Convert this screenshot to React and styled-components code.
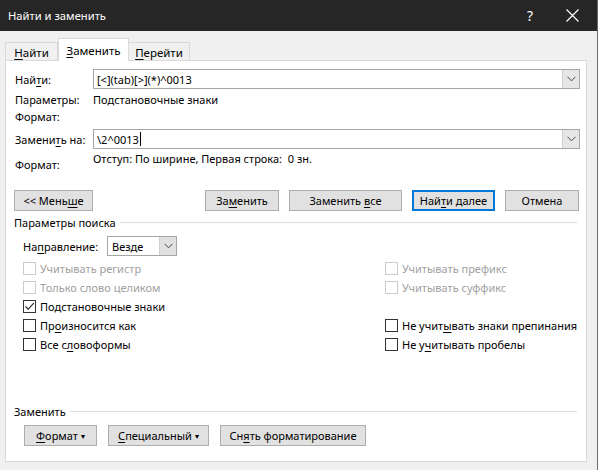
import React from 'react';
import styled, { createGlobalStyle } from 'styled-components';

const GlobalStyle = createGlobalStyle`
    html, body {
        margin: 0;
        padding: 0;
        background: #f0f0f0;
    }
    body {
        font-family: "Noto Sans", "Open Sans", sans-serif;
        font-size: 11px;
        color: #000;
    }
`;

const U = ({ children }) => <Ul>{children}</Ul>;

const Chevron = () => (
    <svg width="9" height="6" viewBox="0 0 9 6">
        <path d="M0.5 0.8 L4.5 4.8 L8.5 0.8" fill="none" stroke="#444" strokeWidth="1" />
    </svg>
);

const Combo = ({ value, caret }) => (
    <ComboBox>
        <ComboText>
            {value}
            {caret && <Caret />}
        </ComboText>
        <DropButton><Chevron /></DropButton>
    </ComboBox>
);

const Check = ({ label, checked, disabled }) => (
    <CheckRow $disabled={disabled}>
        <Box $disabled={disabled}>
            {checked && (
                <svg width="11" height="11" viewBox="0 0 11 11">
                    <path d="M1.5 5.5 L4.2 8.2 L9.8 2.2" fill="none" stroke="#222" strokeWidth="1.1" />
                </svg>
            )}
        </Box>
        <span>{label}</span>
    </CheckRow>
);

const App = () => {
    return (
        <>
            <GlobalStyle />
            <Dialog>
                <TitleBar>
                    <Title>Найти и заменить</Title>
                    <TitleButton>?</TitleButton>
                    <CloseButton>
                        <svg width="13" height="13" viewBox="0 0 13 13">
                            <path d="M0.5 0.5 L12.5 12.5 M12.5 0.5 L0.5 12.5" stroke="#fff" strokeWidth="1.2" />
                        </svg>
                    </CloseButton>
                </TitleBar>

                <Body>
                    <Tabs>
                        <Tab $w={53}><span><U>Н</U>айти</span></Tab>
                        <Tab $w={71} $active><span><U>З</U>аменить</span></Tab>
                        <Tab $w={61}><span><U>П</U>ерейти</span></Tab>
                    </Tabs>

                    <Panel>
                        <FieldRow>
                            <Label>Най<U>т</U>и:</Label>
                            <Combo value="[<](tab)[>](*)^0013" />
                        </FieldRow>
                        <InfoRow>
                            <Label>Параметры:</Label>
                            <Value>Подстановочные знаки</Value>
                        </InfoRow>
                        <InfoRow $top={0}>
                            <Label>Формат:</Label>
                            <Value />
                        </InfoRow>

                        <FieldRow $top={4}>
                            <Label>Замени<U>т</U>ь на:</Label>
                            <Combo value="\2^0013" caret />
                        </FieldRow>
                        <FormatRow>
                            <Label $low>Формат:</Label>
                            <Value>Отступ: По ширине, Первая строка:&nbsp; 0 зн.</Value>
                        </FormatRow>

                        <ButtonRow>
                            <Button $w={79}><span>&lt;&lt; Мень<U>ш</U>е</span></Button>
                            <Spacer />
                            <Button $w={74}><span>За<U>м</U>енить</span></Button>
                            <Button $w={113}><span>Заменить <U>в</U>се</span></Button>
                            <Button $w={83} $default><span>Най<U>т</U>и далее</span></Button>
                            <Button $w={74}><span>Отмена</span></Button>
                        </ButtonRow>

                        <Section>
                            <span>Параметры поиска</span>
                            <Line />
                        </Section>

                        <DirectionRow>
                            <DirLabel>На<U>п</U>равление:</DirLabel>
                            <Select>
                                <SelectText>Везде</SelectText>
                                <SelectButton><Chevron /></SelectButton>
                            </Select>
                        </DirectionRow>

                        <Checks>
                            <Check label="Учитывать регистр" disabled />
                            <Check label="Учитывать префикс" disabled />
                            <Check label="Только слово целиком" disabled />
                            <Check label="Учитывать суффикс" disabled />
                            <Check label="Подстановочные знаки" checked />
                            <div />
                            <Check label={<>Пр<U>о</U>износится как</>} />
                            <Check label={<>Не учит<U>ы</U>вать знаки препинания</>} />
                            <Check label={<>Все с<U>л</U>овоформы</>} />
                            <Check label={<>Не у<U>ч</U>итывать пробелы</>} />
                        </Checks>

                        <Section $top={49}>
                            <span>Заменить</span>
                            <Line />
                        </Section>

                        <BottomRow>
                            <Button $w={73}><span><U>Ф</U>ормат<Tri>▾</Tri></span></Button>
                            <Button $w={101}><span><U>С</U>пециальный<Tri>▾</Tri></span></Button>
                            <Button $w={146}><span>Сн<U>я</U>ть форматирование</span></Button>
                        </BottomRow>
                    </Panel>
                </Body>
            </Dialog>
        </>
    );
};

export default App;

const Dialog = styled.div`
    width: 598px;
    height: 470px;
    background: #f0f0f0;
    box-sizing: border-box;
    border-right: 1px solid #6a6a6a;
    display: flex;
    flex-direction: column;
    overflow: hidden;
`;

const TitleBar = styled.div`
    height: 31px;
    background: #262626;
    display: flex;
    align-items: center;
    padding-left: 8px;
    color: #fff;
`;

const Title = styled.div`
    flex: 1;
    font-size: 11.2px;
`;

const TitleButton = styled.div`
    width: 46px;
    text-align: center;
    font-size: 14px;
    margin-right: -4px;
`;

const CloseButton = styled.div`
    width: 46px;
    display: flex;
    justify-content: center;
    margin-right: 2px;
`;

const Body = styled.div`
    padding: 7px 10px 0 5px;
    display: flex;
    flex-direction: column;
`;

const Tabs = styled.div`
    display: flex;
    align-items: flex-end;
    height: 23px;
    position: relative;
    z-index: 1;
    margin-bottom: -1px;
`;

const Tab = styled.div`
    width: ${p => p.$w}px;
    height: ${p => (p.$active ? 23 : 19)}px;
    box-sizing: border-box;
    border: 1px solid #d9d9d9;
    border-bottom: ${p => (p.$active ? 'none' : '1px solid #d9d9d9')};
    border-left: ${p => (p.$active ? '1px solid #d9d9d9' : 'none')};
    background: ${p => (p.$active ? '#fff' : '#f0f0f0')};
    display: flex;
    align-items: center;
    justify-content: center;
    padding-top: ${p => (p.$active ? 0 : 1)}px;
    font-size: 11.5px;

    &:first-child {
        border-left: 1px solid #d9d9d9;
    }
`;

const Panel = styled.div`
    height: 402px;
    box-sizing: border-box;
    background: #fff;
    border: 1px solid #d9d9d9;
    padding: 0 6px 0 9px;
    display: flex;
    flex-direction: column;
`;

const Ul = styled.span`
    text-decoration: underline;
    text-underline-offset: 2px;
`;

const FieldRow = styled.div`
    display: flex;
    align-items: center;
    height: 20px;
    margin-top: ${p => p.$top ?? 8}px;
`;

const Label = styled.div`
    width: 78px;
    flex-shrink: 0;
    white-space: nowrap;
    padding-top: ${p => (p.$low ? 6 : 0)}px;
`;

const InfoRow = styled.div`
    display: flex;
    height: 17px;
    line-height: 17px;
    margin-top: ${p => p.$top ?? 2}px;
`;

const FormatRow = styled.div`
    display: flex;
    height: 24px;
    line-height: 17px;
    margin-top: 1px;
`;

const Value = styled.div`
    flex: 1;
`;

const ComboBox = styled.div`
    flex: 1;
    height: 20px;
    box-sizing: border-box;
    border: 1px solid #a6a6a6;
    display: flex;
    align-items: stretch;
    background: #fff;
`;

const ComboText = styled.div`
    flex: 1;
    display: flex;
    align-items: center;
    padding-left: 3px;
`;

const Caret = styled.span`
    display: inline-block;
    width: 1px;
    height: 14px;
    background: #000;
    margin-left: 1px;
`;

const DropButton = styled.div`
    width: 16px;
    background: #e6e6e6;
    border-left: 1px solid #cfcfcf;
    display: flex;
    align-items: center;
    justify-content: center;
`;

const ButtonRow = styled.div`
    display: flex;
    gap: 10px;
    margin: 16px 0 0 -1px;
    padding-right: 1px;
`;

const Spacer = styled.div`
    flex: 1;
`;

const Button = styled.div`
    width: ${p => p.$w}px;
    height: 21px;
    box-sizing: border-box;
    background: #e1e1e1;
    border: 1px solid ${p => (p.$default ? '#0078d7' : '#adadad')};
    box-shadow: ${p => (p.$default ? 'inset 0 0 0 1px #0078d7' : 'none')};
    display: flex;
    align-items: center;
    justify-content: center;
    white-space: nowrap;
`;

const Tri = styled.span`
    font-size: 8px;
    margin-left: 3px;
    position: relative;
    top: -1px;
`;

const Section = styled.div`
    display: flex;
    align-items: center;
    height: 16px;
    margin: ${p => p.$top ?? 3}px 0 0 -1px;
    gap: 4px;
`;

const Line = styled.div`
    flex: 1;
    height: 1px;
    background: #dcdcdc;
    margin-right: 3px;
`;

const DirectionRow = styled.div`
    display: flex;
    align-items: center;
    margin-top: 6px;
    padding-left: 8px;
`;

const DirLabel = styled.div`
    width: 84px;
`;

const Select = styled.div`
    width: 70px;
    height: 20px;
    box-sizing: border-box;
    border: 1px solid #a6a6a6;
    display: flex;
`;

const SelectText = styled.div`
    flex: 1;
    display: flex;
    align-items: center;
    padding-left: 4px;
`;

const SelectButton = styled.div`
    width: 16px;
    background: #e1e1e1;
    border-left: 1px solid #cfcfcf;
    display: flex;
    align-items: center;
    justify-content: center;
`;

const Checks = styled.div`
    display: grid;
    grid-template-columns: 362px 1fr;
    grid-auto-rows: 19px;
    margin-top: 3px;
    padding-left: 8px;
`;

const CheckRow = styled.div`
    display: flex;
    align-items: center;
    gap: 4px;
    white-space: nowrap;
    color: ${p => (p.$disabled ? '#a0a0a0' : '#000')};
`;

const Box = styled.div`
    width: 13px;
    height: 13px;
    box-sizing: border-box;
    border: 1px solid ${p => (p.$disabled ? '#cccccc' : '#333')};
    display: flex;
    align-items: center;
    justify-content: center;
    background: #fff;
`;

const BottomRow = styled.div`
    display: flex;
    align-items: center;
    gap: 11px;
    margin-top: 6px;
    padding-left: 9px;
`;
